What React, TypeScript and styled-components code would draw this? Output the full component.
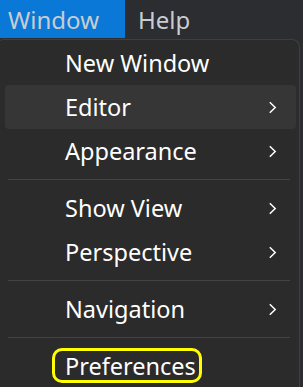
import React from 'react';
import styled, { createGlobalStyle } from 'styled-components';

const GlobalStyle = createGlobalStyle`
  html, body {
    margin: 0;
    padding: 0;
    background: #2b2b2b;
    overflow: hidden;
  }
  body {
    font-family: "Noto Sans", "Open Sans", sans-serif;
  }
`;

// Styled Components:

const Screen = styled.div`
  width: 303px;
  height: 387px;
  display: flex;
  flex-direction: column;
  background: #2b2d30;
  overflow: hidden;
`;

const MenuBar = styled.nav`
  display: flex;
  height: 38px;
  background: #2b2d30;
  flex-shrink: 0;
`;

const BarItem = styled.div<{ $active?: boolean }>`
  display: flex;
  align-items: center;
  width: ${p => (p.$active ? '125px' : 'auto')};
  box-sizing: border-box;
  padding: 0 0 0 ${p => (p.$active ? '8px' : '13px')};
  font-size: 24px;
  color: #c9ccd0;
  background: ${p => (p.$active ? '#0a78d7' : 'transparent')};
`;

const Dropdown = styled.div`
  flex: 1;
  margin: 1px 3px 0 -4px;
  padding: 1px 3px 0 8px;
  background: #2b2b2b;
  border: 1px solid #3f3f3f;
  border-bottom: none;
  border-radius: 8px 8px 0 0;
`;

const Item = styled.div<{ $hover?: boolean }>`
  display: flex;
  align-items: center;
  flex-shrink: 0;
  height: 44px;
  padding: 0 19px 0 60px;
  border-radius: 4px;
  background: ${p => (p.$hover ? '#363636' : 'transparent')};
  color: #ffffff;
  font-size: 23.5px;
`;

const Label = styled.span<{ $marked?: boolean }>`
  position: relative;

  ${p =>
    p.$marked &&
    `
    &::after {
      content: '';
      position: absolute;
      left: -13px;
      right: -6px;
      top: -2px;
      bottom: -1px;
      border: 3px solid #ffff00;
      border-radius: 10px;
    }
  `}
`;

const Chevron = styled.svg`
  width: 9px;
  height: 13px;
  margin-left: auto;
  flex-shrink: 0;
`;

const Separator = styled.div`
  height: 1px;
  margin: 6px 6px 6px 3px;
  background: #444444;
`;

type Entry = { label: string; sub?: boolean; hover?: boolean; marked?: boolean } | 'sep';

const entries: Entry[] = [
  { label: 'New Window' },
  { label: 'Editor', sub: true, hover: true },
  { label: 'Appearance', sub: true },
  'sep',
  { label: 'Show View', sub: true },
  { label: 'Perspective', sub: true },
  'sep',
  { label: 'Navigation', sub: true },
  'sep',
  { label: 'Preferences', marked: true },
];

function App() {
  return (
    <Screen>
      <GlobalStyle />
      <MenuBar>
        <BarItem $active>Window</BarItem>
        <BarItem>Help</BarItem>
      </MenuBar>
      <Dropdown>
        {entries.map((e, i) =>
          e === 'sep' ? (
            <Separator key={i} />
          ) : (
            <Item key={i} $hover={e.hover}>
              <Label $marked={e.marked}>{e.label}</Label>
              {e.sub && (
                <Chevron viewBox="0 0 9 13">
                  <path d="M1.8 1.2 L7.2 6.5 L1.8 11.8" fill="none" stroke="#ffffff" strokeWidth="1.5" />
                </Chevron>
              )}
            </Item>
          )
        )}
      </Dropdown>
    </Screen>
  );
}

export default App;
